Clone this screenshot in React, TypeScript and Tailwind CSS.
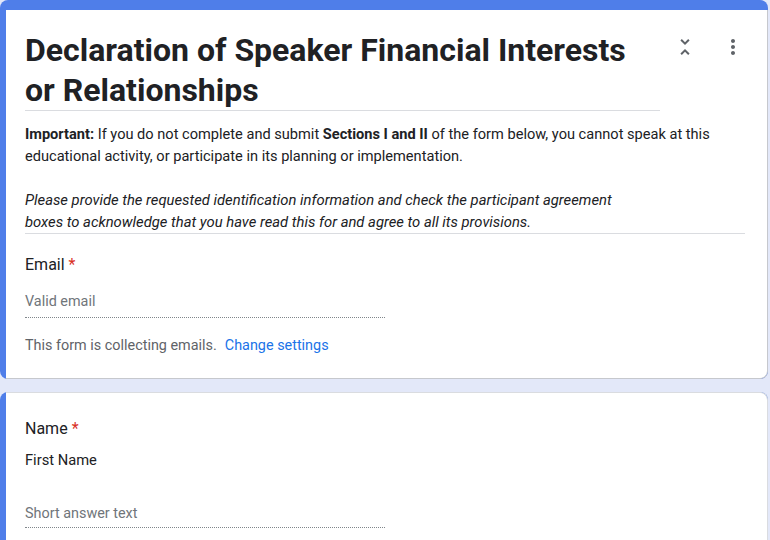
import React from "react";

const font = { fontFamily: "Roboto, 'Noto Sans', Arial, sans-serif" };

function UnfoldLess() {
  return (
    <svg width="24" height="24" viewBox="0 0 24 24" fill="#5f6368">
      <path d="M7.41 18.59 8.83 20 12 16.83 15.17 20l1.41-1.41L12 14l-4.59 4.59zm9.18-13.18L15.17 4 12 7.17 8.83 4 7.41 5.41 12 10l4.59-4.59z" />
    </svg>
  );
}

function MoreVert() {
  return (
    <svg width="24" height="24" viewBox="0 0 24 24" fill="#5f6368">
      <path d="M12 8c1.1 0 2-.9 2-2s-.9-2-2-2-2 .9-2 2 .9 2 2 2zm0 2c-1.1 0-2 .9-2 2s.9 2 2 2 2-.9 2-2-.9-2-2-2zm0 6c-1.1 0-2 .9-2 2s.9 2 2 2 2-.9 2-2-.9-2-2-2z" />
    </svg>
  );
}

export default function App() {
  return (
    <div
      className="w-[770px] h-[540px] overflow-hidden bg-[#e3e8f9] pr-[2px] text-[#202124]"
      style={font}
    >
      {/* Header card */}
      <div className="rounded-lg bg-[#4f7ee9] pt-[10px] pl-[6px]">
        <div className="bg-white rounded-br-lg border-r border-b border-[#c6c8cd] pl-[19px] pr-[22px] pb-[22px]">
          <div className="flex items-start pt-[20px]">
            <div className="w-[635px] border-b border-[#dadce0] text-[32px] leading-[40px] font-bold whitespace-nowrap">
              Declaration of Speaker Financial Interests
              <br />
              or Relationships
            </div>
            <div className="flex items-center ml-[13px] mt-[5px] gap-[24px]">
              <UnfoldLess />
              <MoreVert />
            </div>
          </div>
          <div className="mt-[12px] border-b border-[#dadce0] text-[14.6px] leading-[22px] whitespace-nowrap">
            <span className="font-bold">Important:</span> If you do not complete and submit{" "}
            <span className="font-bold">Sections I and II</span> of the form below, you cannot speak at this
            <br />
            educational activity, or participate in its planning or implementation.
            <br />
            <br />
            <span className="italic text-[14.8px]">
              Please provide the requested identification information and check the participant agreement
              <br />
              boxes to acknowledge that you have read this for and agree to all its provisions.
            </span>
          </div>
          <div className="pt-[19px] text-[16px] leading-[24px]">
            Email<span className="text-[#d93025] ml-[4px]">*</span>
          </div>
          <div className="mt-[15px] w-[360px] border-b border-dotted border-[#80868b] pb-[5px] text-[14.4px] leading-[20px] text-[#70757a]">
            Valid email
          </div>
          <div className="mt-[18px] text-[14.4px] leading-[20px] text-[#5f6368]">
            This form is collecting emails.
            <span className="ml-[8px] text-[#1a73e8]">Change settings</span>
          </div>
        </div>
      </div>

      {/* Name card */}
      <div className="mt-[13px] rounded-lg bg-[#4f7ee9] pl-[6px]">
        <div className="bg-white rounded-tr-lg border-t border-r border-[#dadce0] pl-[19px] pt-[24px] h-[160px]">
          <div className="text-[16px] leading-[24px]">
            Name<span className="text-[#d93025] ml-[4px]">*</span>
          </div>
          <div className="mt-[9px] text-[14.7px] leading-[20px]">First Name</div>
          <div className="mt-[34px] w-[360px] border-b border-dotted border-[#80868b] pb-[3px] text-[14.4px] leading-[20px] text-[#70757a]">
            Short answer text
          </div>
        </div>
      </div>
    </div>
  );
}
